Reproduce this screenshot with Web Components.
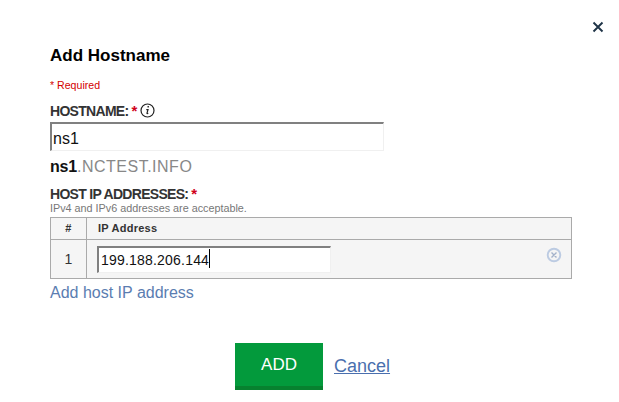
<!DOCTYPE html>
<html>
<head>
<meta charset="utf-8">
<title>Add Hostname</title>
<style>
  html, body { margin: 0; padding: 0; background: #fff; }
  body { font-family: "Liberation Sans", Arial, sans-serif; }
</style>
</head>
<body>
<add-hostname-dialog></add-hostname-dialog>

<script>
class TextBox extends HTMLElement {
  connectedCallback() {
    const caret = this.hasAttribute('caret');
    this.attachShadow({ mode: 'open' }).innerHTML = `
      <style>
        :host {
          display: flex;
          align-items: center;
          box-sizing: border-box;
          background: #fff;
          border-style: solid;
          border-width: 2px 1px 1px 2px;
          border-color: #808080 #f0f0f0 #f0f0f0 #808080;
          color: #111;
          font-size: 16px;
          padding: 4px 0 0 1px;
        }
        i { width: 1px; height: 19px; background: #000; margin-top: -2px; }
      </style>
      <span><slot></slot></span>${caret ? '<i></i>' : ''}
    `;
  }
}

class FieldLabel extends HTMLElement {
  connectedCallback() {
    this.attachShadow({ mode: 'open' }).innerHTML = `
      <style>
        :host {
          display: flex;
          align-items: center;
          gap: 3px;
          color: #333;
          font-size: 14px;
          font-weight: bold;
          line-height: 16px;
          letter-spacing: -0.7px;
        }
        b { color: #d0021b; font-size: 15px; letter-spacing: 0; }
      </style>
      <span><slot></slot></span><b>*</b><slot name="after"></slot>
    `;
  }
}

class IpTable extends HTMLElement {
  connectedCallback() {
    this.attachShadow({ mode: 'open' }).innerHTML = `
      <style>
        :host {
          display: grid;
          grid-template-columns: 36px 1fr;
          grid-template-rows: 22px 38px;
          box-sizing: border-box;
          width: 522px;
          background: #f5f5f5;
          border: 1px solid #aaa;
          color: #333;
        }
        div { display: flex; align-items: center; }
        .num { justify-content: center; border-right: 1px solid #aaa; }
        .head { font-size: 11px; font-weight: bold; letter-spacing: .25px; border-bottom: 1px solid #aaa; padding-bottom: 1px; }
        .cell { font-size: 14px; }
        .addr { justify-content: space-between; padding: 0 9px 0 10px; }
        text-box { width: 234px; height: 27px; font-size: 14px; letter-spacing: .2px; padding: 0 0 0 2px; }
        svg { display: block; margin-top: -8px; }
      </style>
      <div class="head num">#</div>
      <div class="head" style="padding-left:11px">IP Address</div>
      <div class="cell num">1</div>
      <div class="cell addr">
        <text-box caret>199.188.206.144</text-box>
        <svg width="16" height="16" viewBox="0 0 16 16" fill="none" stroke="#bccbe2">
          <circle cx="8" cy="8" r="6.300" stroke-width="1.900"/>
          <path d="M5.500 5.500l5 5M10.500 5.500l-5 5" stroke-width="1.400" stroke="#a4b2ca"/>
        </svg>
      </div>
    `;
  }
}

class AddHostnameDialog extends HTMLElement {
  connectedCallback() {
    this.attachShadow({ mode: 'open' }).innerHTML = `
      <style>
        :host {
          display: block;
          position: relative;
          box-sizing: border-box;
          width: 619px;
          height: 402px;
          padding: 46px 47px 0 50px;
          background: #fff;
          overflow: hidden;
        }
        .close { position: absolute; top: 21px; left: 592px; display: block; }
        h2 { margin: 0; font-size: 17px; line-height: 19px; color: #000; letter-spacing: 0; }
        .req { margin-top: 13px; color: #d40000; font-size: 10.600px; line-height: 14px; }
        field-label.host { margin-top: 11px; }
        .info { display: block; margin-top: -1px; }
        text-box.name { width: 334px; height: 29px; margin-top: 3px; }
        .preview { margin-top: 7px; font-size: 16px; line-height: 18px; color: #888; letter-spacing: .5px; }
        .preview b { color: #111; letter-spacing: -.2px; }
        field-label.ips { margin-top: 10px; }
        .hint { font-size: 10.800px; line-height: 12px; color: #777; }
        ip-table { margin-top: 3px; }
        .add-ip { display: block; margin-top: 4px; font-size: 16px; line-height: 19px; color: #5b7db1; text-decoration: none; }
        .actions { display: flex; align-items: flex-start; gap: 11px; margin: 41px 0 0 185px; }
        button {
          width: 88px;
          height: 47px;
          padding: 0;
          border: 0;
          border-bottom: 4px solid #07812f;
          background: #039a3c;
          color: #fff;
          font: 17px "Liberation Sans", Arial, sans-serif;
        }
        .cancel { margin-top: 13px; font-size: 18px; line-height: 21px; color: #4a6fae; }
      </style>
      <svg class="close" width="12" height="12" viewBox="0 0 12 12" stroke="#1f3447" stroke-width="1.9" fill="none">
        <path d="M1.500 1.500l9 9M10.500 1.500l-9 9"/>
      </svg>
      <h2>Add Hostname</h2>
      <div class="req">* Required</div>
      <field-label class="host">HOSTNAME:
        <svg slot="after" class="info" width="15" height="15" viewBox="0 0 15 15" fill="none" stroke="#222">
          <circle cx="7.500" cy="7.500" r="6.500" stroke-width="1.200"/>
          <path d="M6.300 6.700h1.700l-1 3.500c-.1.400.3.500 1.300.1" stroke-width="1.200"/>
          <path d="M7.500 3.800h1.400" stroke-width="1.500"/>
        </svg>
      </field-label>
      <text-box class="name">ns1</text-box>
      <div class="preview"><b>ns1</b>.NCTEST.INFO</div>
      <field-label class="ips">HOST IP ADDRESSES:</field-label>
      <div class="hint">IPv4 and IPv6 addresses are acceptable.</div>
      <ip-table></ip-table>
      <a class="add-ip" href="#">Add host IP address</a>
      <div class="actions">
        <button>ADD</button>
        <a class="cancel" href="#">Cancel</a>
      </div>
    `;
  }
}

customElements.define('text-box', TextBox);
customElements.define('field-label', FieldLabel);
customElements.define('ip-table', IpTable);
customElements.define('add-hostname-dialog', AddHostnameDialog);
</script>
</body>
</html>
